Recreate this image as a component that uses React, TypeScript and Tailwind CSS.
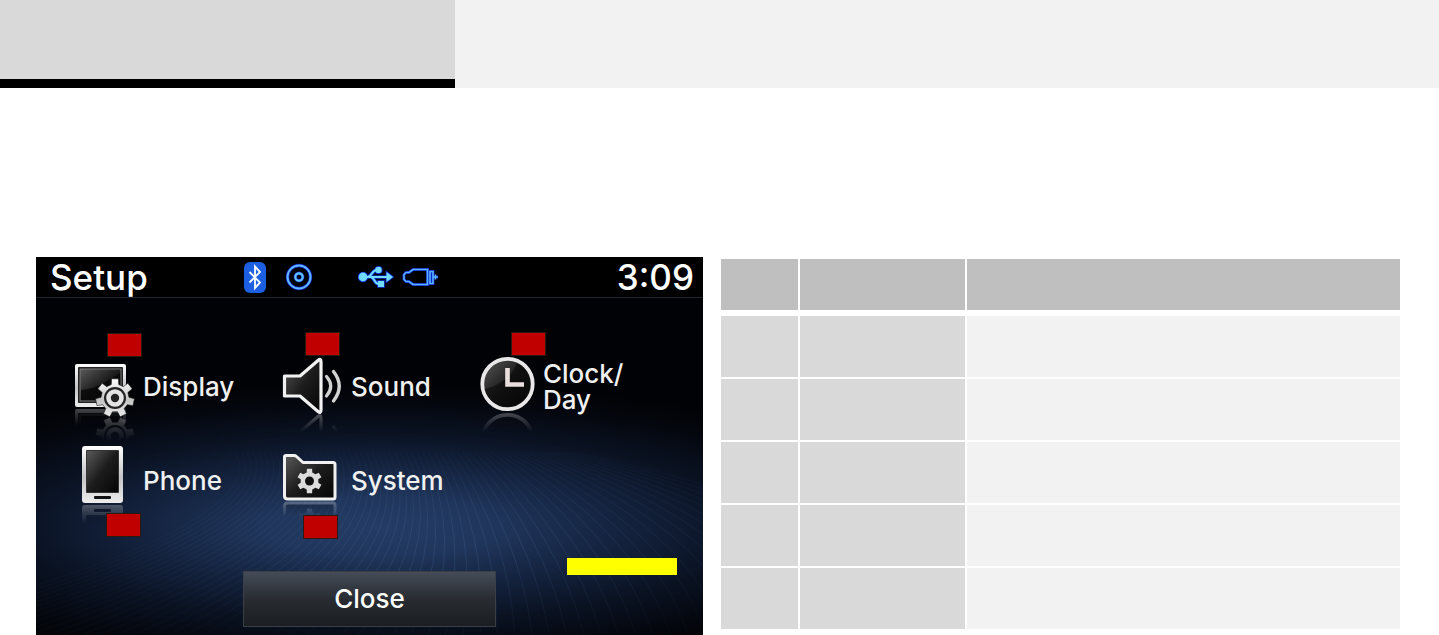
import type { ReactNode } from "react";

/* Points of a cog outline, n teeth, first tooth pointing up */
function cog(cx: number, cy: number, n: number, outer: number, inner: number) {
  const pts: string[] = [];
  const step = (Math.PI * 2) / n;
  const corners = [
    [-0.3, inner],
    [-0.2, outer],
    [0.2, outer],
    [0.3, inner],
  ];
  for (let i = 0; i < n; i++) {
    const a = i * step - Math.PI / 2;
    corners.forEach(([k, r]) => {
      pts.push(`${(cx + Math.cos(a + k * step) * r).toFixed(2)},${(cy + Math.sin(a + k * step) * r).toFixed(2)}`);
    });
  }
  return pts.join(" ");
}

/* Mirrors its children under the line y=base and fades them out */
function Reflection({ id, base, depth, children }: { id: string; base: number; depth: number; children: ReactNode }) {
  return (
    <>
      <defs>
        <linearGradient id={`${id}-fade`} x1="0" y1={base} x2="0" y2={base + depth} gradientUnits="userSpaceOnUse">
          <stop offset="0" stopColor="#fff" stopOpacity="0.3" />
          <stop offset="1" stopColor="#fff" stopOpacity="0" />
        </linearGradient>
        <mask id={`${id}-mask`} maskUnits="userSpaceOnUse" x="-5" y={base} width="80" height={depth}>
          <rect x="-5" y={base} width="80" height={depth} fill={`url(#${id}-fade)`} />
        </mask>
      </defs>
      <g mask={`url(#${id}-mask)`}>
        <g transform={`translate(0 ${base * 2}) scale(1 -1)`}>{children}</g>
      </g>
    </>
  );
}

function DisplayIcon() {
  const screen = (
    <>
      <rect x="1" y="8" width="51" height="43" rx="2" fill="url(#metal)" />
      <rect x="4" y="11" width="45" height="36" rx="1" fill="#222" />
      <rect x="6" y="13" width="41" height="32" fill="url(#glass)" stroke="#888" strokeWidth="0.8" />
      <path d="M7 44V34C22 33 32 26 46 17V44Z" fill="#050505" opacity="0.75" />
    </>
  );
  const gear = (
    <>
      <polygon points={cog(41, 42, 7, 19.5, 14)} fill="url(#metal)" stroke="#161616" strokeWidth="0.6" strokeLinejoin="round" />
      <circle cx="41" cy="42" r="11" fill="#242424" />
      <circle cx="41" cy="42" r="6.500" fill="none" stroke="#e4e4e4" strokeWidth="4.600" />
    </>
  );
  return (
    <svg viewBox="0 0 60 60" className="h-[60px] w-[60px] shrink-0 overflow-visible" aria-hidden="true">
      <Reflection id="display" base={52} depth={18}>{screen}</Reflection>
      <Reflection id="gear" base={61} depth={24}>{gear}</Reflection>
      {screen}
      {gear}
    </svg>
  );
}

function SoundIcon() {
  const speaker = (
    <>
      <path d="M2.500 20H18L36 4.500Q39 2 39 5.500V54Q39 58 36 55.500L18 40H2.500Z" fill="url(#glass)" stroke="#f2f2f2" strokeWidth="3.200" strokeLinejoin="round" />
      <path d="M44.500 20.500Q53 30 44.500 40" fill="none" stroke="#d2d2d2" strokeWidth="3.200" strokeLinecap="round" />
      <path d="M51.500 15.500Q63 30 51.500 45" fill="none" stroke="#d2d2d2" strokeWidth="3.400" strokeLinecap="round" />
    </>
  );
  return (
    <svg viewBox="0 0 60 60" className="h-[60px] w-[60px] shrink-0 overflow-visible" aria-hidden="true">
      <Reflection id="sound" base={58} depth={18}>{speaker}</Reflection>
      {speaker}
    </svg>
  );
}

function ClockIcon() {
  const clock = (
    <>
      <circle cx="27.500" cy="28" r="25.200" fill="url(#glass)" stroke="#e9e7e7" strokeWidth="3.800" />
      <path d="M4.500 33C14 32 32 22 37 7A23 23 0 1 1 4.500 33Z" fill="#060606" opacity="0.55" />
      <path d="M27.500 12V28.500H44" fill="none" stroke="#eadfdf" strokeWidth="4.600" />
    </>
  );
  return (
    <svg viewBox="0 0 54 60" className="h-[60px] w-[54px] shrink-0 overflow-visible" aria-hidden="true">
      <Reflection id="clock" base={56} depth={20}>{clock}</Reflection>
      {clock}
    </svg>
  );
}

function PhoneIcon() {
  const phone = (
    <>
      <rect x="8" y="-4" width="41" height="57" rx="3" fill="url(#metal)" />
      <rect x="12" y="0" width="33" height="43" rx="1" fill="#333" />
      <rect x="13" y="1" width="31" height="41" fill="url(#glass)" />
      <rect x="20" y="46" width="17" height="3" rx="1" fill="#111" />
    </>
  );
  return (
    <svg viewBox="0 0 60 60" className="h-[60px] w-[60px] shrink-0 overflow-visible" aria-hidden="true">
      <Reflection id="phone" base={54} depth={20}>{phone}</Reflection>
      {phone}
    </svg>
  );
}

function SystemIcon() {
  const folder = (
    <>
      <path
        d="M2.500 7Q2.500 5.500 4 5.500H12Q13.500 5.500 14.500 6.500L21 12.500H51Q53 12.500 53 14.500V47Q53 49 51 49H6Q2.500 49 2.500 46Z"
        fill="url(#glass)"
        stroke="#f0f0f0"
        strokeWidth="3"
        strokeLinejoin="round"
      />
      <polygon points={cog(27.5, 31, 6, 12.5, 9)} fill="#dcdcdc" strokeLinejoin="round" />
      <circle cx="27.500" cy="31" r="4.500" fill="#111" />
    </>
  );
  return (
    <svg viewBox="0 0 60 60" className="h-[60px] w-[60px] shrink-0 overflow-visible" aria-hidden="true">
      <Reflection id="system" base={51} depth={16}>{folder}</Reflection>
      {folder}
    </svg>
  );
}

/* One strand of the fan behind the menu, t runs from -1 (left) to 1 (right) */
function strand(t: number) {
  const top = 370 + t * 170;
  const bottom = 340 + t * 520;
  const bend = top + 40 + Math.max(0, t) * (bottom - top);
  return `M${top.toFixed(1)} 195Q${bend.toFixed(1)} 275 ${bottom.toFixed(1)} 378`;
}

function Backdrop() {
  const strands = Array.from({ length: 61 }, (_, i) => (i - 30) / 30);
  return (
    <svg viewBox="0 0 667 378" preserveAspectRatio="none" className="absolute inset-0 h-full w-full" aria-hidden="true">
      <defs>
        <radialGradient id="glow" gradientUnits="userSpaceOnUse" cx="0" cy="0" r="1" gradientTransform="translate(345 270) scale(560 145)">
          <stop offset="0" stopColor="#243c66" />
          <stop offset="0.2" stopColor="#20365c" />
          <stop offset="0.42" stopColor="#14233f" />
          <stop offset="0.65" stopColor="#0a1222" />
          <stop offset="0.85" stopColor="#04070e" />
          <stop offset="1" stopColor="#010205" />
        </radialGradient>
        <radialGradient id="line-glow" gradientUnits="userSpaceOnUse" cx="0" cy="0" r="1" gradientTransform="translate(410 290) scale(330 100)">
          <stop offset="0" stopColor="#5f8fc8" stopOpacity="0.17" />
          <stop offset="1" stopColor="#5f8fc8" stopOpacity="0.03" />
        </radialGradient>
      </defs>
      <rect width="667" height="378" fill="url(#glow)" />
      <g fill="none" stroke="url(#line-glow)" strokeWidth="1">
        {strands.map((t) => (
          <path key={t} d={strand(t)} />
        ))}
      </g>
    </svg>
  );
}

const tiles = [
  { label: "Display", icon: <DisplayIcon />, badge: "left-[33px] -top-[23px]" },
  { label: "Sound", icon: <SoundIcon />, badge: "left-[23px] -top-[24px]" },
  { label: "Clock/\nDay", icon: <ClockIcon />, badge: "left-[31px] -top-[24px]" },
  { label: "Phone", icon: <PhoneIcon />, badge: "left-[32px] top-[63px]" },
  { label: "System", icon: <SystemIcon />, badge: "left-[21px] top-[65px]" },
];

function StatusIcons() {
  return (
    <div className="flex items-center" aria-hidden="true">
      {/* Bluetooth */}
      <svg viewBox="0 0 22 31" className="h-[31px] w-[22px]">
        <rect width="22" height="31" rx="6" fill="#1c5fe0" />
        <path d="M5.500 10L16 20.500L11 26V4.500L16 10L5.500 20.500" fill="none" stroke="#f4f8ff" strokeWidth="1.900" />
      </svg>
      {/* Disc */}
      <svg viewBox="0 0 26 26" className="ml-5 h-[26px] w-[26px] overflow-visible" fill="none">
        <circle cx="13" cy="13" r="11.500" stroke="#0a25c8" strokeWidth="3.400" />
        <circle cx="13" cy="13" r="11.500" stroke="#62b8ff" strokeWidth="2" />
        <circle cx="13" cy="13" r="3.700" stroke="#0a25c8" strokeWidth="3.400" />
        <circle cx="13" cy="13" r="3.700" stroke="#62c4ff" strokeWidth="2.200" />
      </svg>
      {/* USB */}
      <svg viewBox="0 0 36 26" className="ml-[46px] h-[26px] w-9">
        <path d="M6 13H30M10 13C14 12 14 6 19 6M13 13C17 14 16 20 21 20" fill="none" stroke="#0a2fd8" strokeWidth="3.600" />
        <g fill="#72dcff" stroke="#0a2fd8" strokeWidth="1.600" paintOrder="stroke">
          <circle cx="5" cy="13" r="4.400" />
          <circle cx="20.500" cy="6" r="3.200" />
          <rect x="20" y="17" width="6" height="6" />
          <path d="M28.500 8L35 13L28.500 18Z" />
        </g>
        <path d="M6 13H30M10 13C14 12 14 6 19 6M13 13C17 14 16 20 21 20" fill="none" stroke="#72dcff" strokeWidth="2" />
      </svg>
      {/* Plug */}
      <svg viewBox="0 0 36 26" className="ml-2 h-[26px] w-9" fill="none">
        <path d="M25.500 5.500H11L7 8.500H4L2 10.500V15.500L4 17.500H7L11 20.500H25.500ZM28 7.500H31V19.500H28ZM31 13H36" stroke="#0a25c8" strokeWidth="3" />
        <path d="M25.500 5.500H11L7 8.500H4L2 10.500V15.500L4 17.500H7L11 20.500H25.500ZM28 7.500H31V19.500H28ZM31 13H36M33.500 10.500V15.500" stroke="#5cb4ff" strokeWidth="1.600" />
      </svg>
    </div>
  );
}

function SetupScreen() {
  return (
    <section className="relative min-w-0 flex-[667] bg-black text-white">
      <Backdrop />
      <div className="relative">
        <header className="flex h-[41px] items-center border-b border-[#20262f] bg-black pr-[9px] pl-[14px]">
          <h1 className="w-[194px] text-[35px] leading-10 font-medium">Setup</h1>
          <StatusIcons />
          <time className="ml-auto text-[35px] leading-10 font-medium">3:09</time>
        </header>

        <nav className="grid grid-cols-[208fr_198fr_223fr] gap-y-[34px] pt-[58px] pl-[38px]">
          {tiles.map((tile) => (
            <div key={tile.label} className="relative h-[60px]">
              <button type="button" className="flex h-[60px] items-center gap-[9px] pt-0.5 text-left text-[26px] leading-[26px] font-medium whitespace-pre-line text-[#f0f0f0]">
                <span className="-mt-0.5">{tile.icon}</span>
                {tile.label}
              </button>
              <span className={`absolute h-6 w-[35px] border border-[#2b1a10] bg-[#c00000] ${tile.badge}`} />
            </div>
          ))}
        </nav>

        <div className="flex justify-center pt-[61px] pb-2">
          <button type="button" className="h-14 w-[38%] border border-[#3a3f46] bg-linear-to-b from-[#454c57] via-[#282c32] to-[#1b1f23] text-[26px] leading-[26px] font-medium">
            Close
          </button>
        </div>
        <span className="absolute right-[26px] bottom-[60px] h-[17px] w-[110px] bg-[#ffff00]" />
      </div>
    </section>
  );
}

function DetailsTable() {
  const rows = [1, 2, 3, 4, 5];
  return (
    <div className="min-w-0 flex-[679] pt-0.5">
      <table className="w-full table-fixed border-separate border-spacing-0">
        <thead>
          <tr className="h-[57px]">
            <th className="w-[79px] border-r-2 border-b-[6px] border-white bg-[#bfbfbf]" />
            <th className="w-[167px] border-r-2 border-b-[6px] border-white bg-[#bfbfbf]" />
            <th className="border-b-[6px] border-white bg-[#bfbfbf]" />
          </tr>
        </thead>
        <tbody>
          {rows.map((row) => (
            <tr key={row} className="h-[63px]">
              <td className="border-r-2 border-b-2 border-white bg-[#d9d9d9]" />
              <td className="border-r-2 border-b-2 border-white bg-[#d9d9d9]" />
              <td className="border-b-2 border-white bg-[#f2f2f2]" />
            </tr>
          ))}
        </tbody>
      </table>
    </div>
  );
}

export default function App() {
  return (
    <div className="bg-white font-['Inter',sans-serif]">
      {/* Shared fills for the screen icons */}
      <svg className="absolute h-0 w-0" aria-hidden="true">
        <defs>
          <linearGradient id="metal" x1="0" y1="0" x2="0" y2="1">
            <stop offset="0" stopColor="#ffffff" />
            <stop offset="0.55" stopColor="#c4c4c4" />
            <stop offset="1" stopColor="#ededed" />
          </linearGradient>
          <linearGradient id="glass" x1="0" y1="0" x2="1" y2="1">
            <stop offset="0" stopColor="#5a5a5a" />
            <stop offset="0.5" stopColor="#1c1c1c" />
            <stop offset="1" stopColor="#050505" />
          </linearGradient>
        </defs>
      </svg>

      <div className="flex h-[88px] bg-[#f2f2f2]">
        <div className="w-[455px] border-b-[9px] border-black bg-[#d9d9d9]" />
      </div>

      <main className="flex items-start gap-[18px] pt-[169px] pr-[39px] pl-9">
        <SetupScreen />
        <DetailsTable />
      </main>
    </div>
  );
}
